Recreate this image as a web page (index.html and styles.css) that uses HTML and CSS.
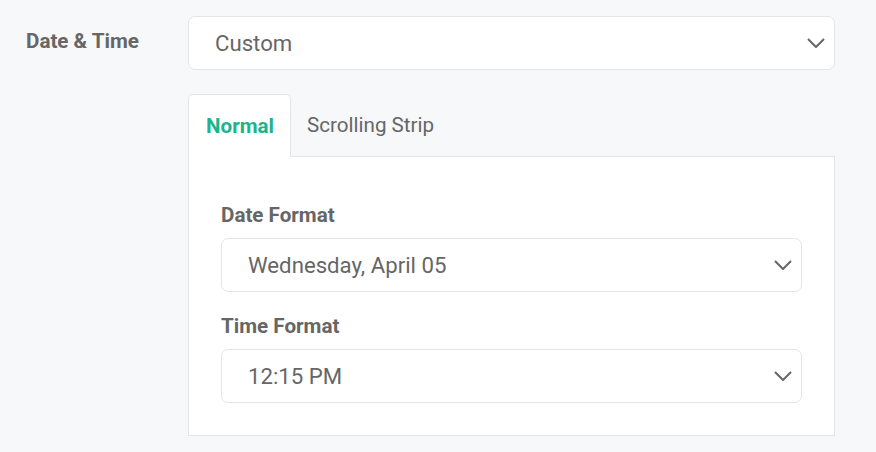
FILE: index.html
```html
<!DOCTYPE html>
<html lang="en">
<head>
    <meta charset="UTF-8">
    <meta name="viewport" content="width=device-width, initial-scale=1.0">
    <title>Date &amp; Time settings</title>
    <link rel="stylesheet" href="styles.css">
</head>
<body>
    <div class="settings">
        <div class="field-label">Date &amp; Time</div>
        <div class="field-body">
            <div class="select select-top">
                <span>Custom</span>
                <svg class="chevron" viewBox="0 0 18 10"><path d="M1 1l8 8 8-8"/></svg>
            </div>

            <div class="tabs">
                <div class="tab active">Normal</div>
                <div class="tab">Scrolling Strip</div>
            </div>
            <div class="panel">
                <div class="group">
                    <div class="group-label">Date Format</div>
                    <div class="select">
                        <span>Wednesday, April 05</span>
                        <svg class="chevron" viewBox="0 0 18 10"><path d="M1 1l8 8 8-8"/></svg>
                    </div>
                </div>
                <div class="group">
                    <div class="group-label">Time Format</div>
                    <div class="select">
                        <span>12:15 PM</span>
                        <svg class="chevron" viewBox="0 0 18 10"><path d="M1 1l8 8 8-8"/></svg>
                    </div>
                </div>
            </div>
        </div>
    </div>
</body>
</html>
```

FILE: styles.css
```css
body {
    font-family: Roboto, 'Liberation Sans', sans-serif;
    margin: 0;
    padding: 0;
    background: #f7f8fa;
    color: #666;
}

.settings {
    display: grid;
    grid-template-columns: 162px 647px;
    padding: 16px 0 0 26px;
}

.field-label {
    font-size: 20.6px;
    font-weight: bold;
    color: #666;
    height: 54px;
    line-height: 54px;
    margin-top: -2px;
}

.select {
    display: flex;
    align-items: center;
    justify-content: space-between;
    box-sizing: border-box;
    height: 54px;
    padding: 0 9px 0 26px;
    background: #fff;
    border: 1px solid #e3e5e8;
    border-radius: 7px;
    font-size: 22.2px;
    color: #666;
}

.chevron {
    width: 18px;
    height: 10px;
    fill: none;
    stroke: #666;
    stroke-width: 2;
}

.tabs {
    display: flex;
    margin-top: 24px;
    height: 62px;
}

.tab {
    box-sizing: border-box;
    padding: 0 16px;
    line-height: 62px;
    font-size: 20.6px;
    color: #666;
}

.tab.active {
    width: 103px;
    padding: 0 17px;
    background: #fff;
    border: 1px solid #e3e5e8;
    border-bottom: none;
    border-radius: 5px 5px 0 0;
    color: #1db38d;
    font-weight: bold;
    position: relative;
    z-index: 1;
    height: 63px;
}

.panel {
    background: #fff;
    border: 1px solid #e3e5e8;
    padding: 46px 32px 32px;
}

.group + .group {
    margin-top: 22px;
}

.group-label {
    font-size: 20.6px;
    font-weight: bold;
    color: #666;
    line-height: 24px;
    margin-bottom: 11px;
}
```
